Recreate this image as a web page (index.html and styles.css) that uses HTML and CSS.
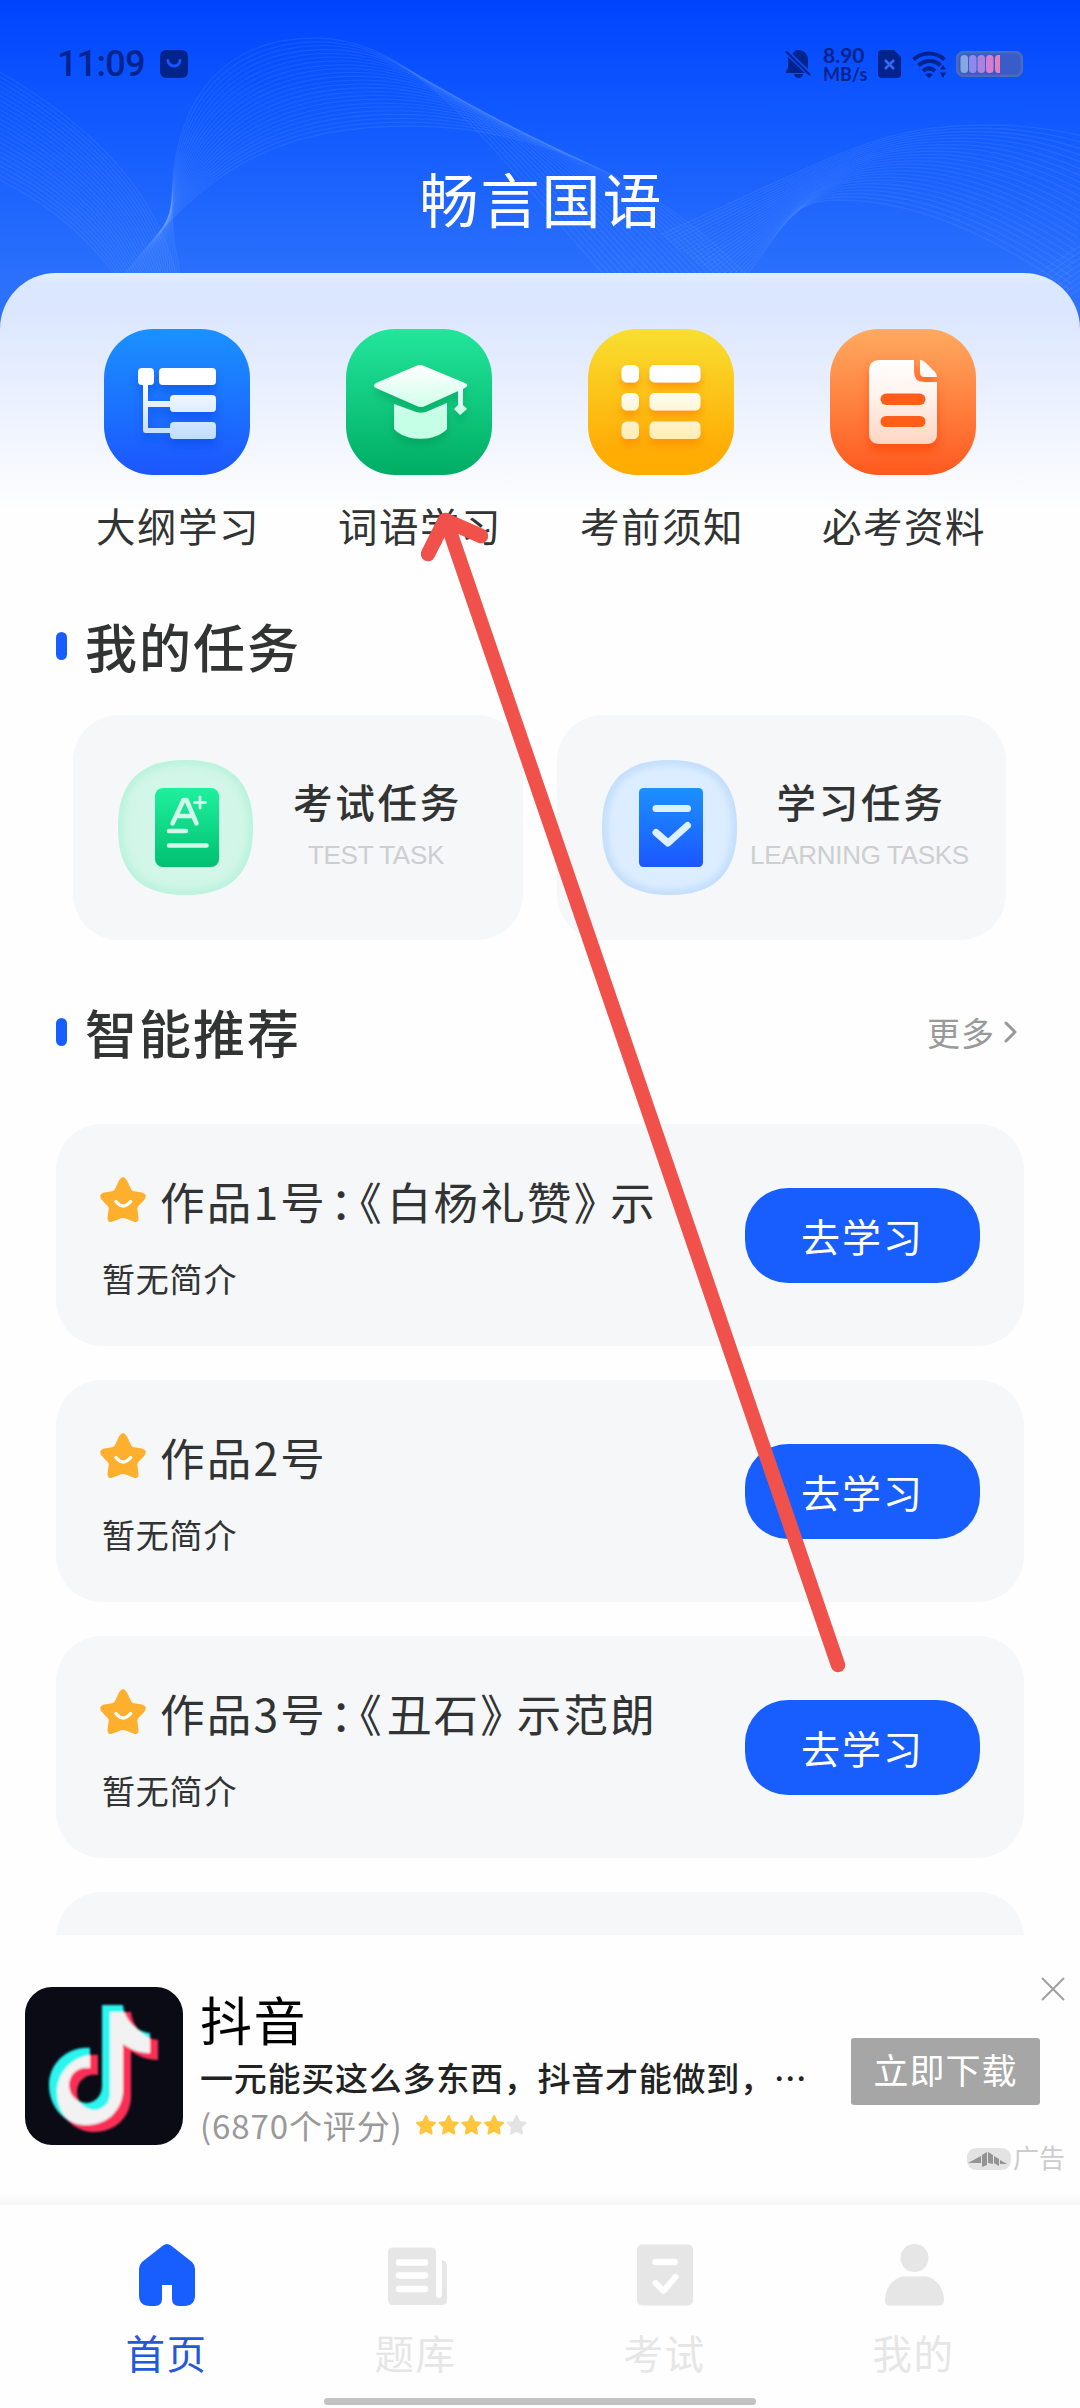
FILE: index.html
```html
<!DOCTYPE html>
<html lang="zh-CN">
<head>
<meta charset="utf-8">
<title>畅言国语</title>
<link rel="stylesheet" href="styles.css">
</head>
<body>
<div class="app">
  <header class="hero">
    <svg class="waves" id="waves" viewBox="0 0 1080 340" aria-hidden="true"></svg>
    <div class="statusbar">
      <div class="status-left">
        <span class="time">11:09</span>
        <svg width="28" height="28" viewBox="0 0 28 28"><rect width="28" height="28" rx="6" fill="#00238c"/><path d="M8 10.500a6 5.500 0 0 0 12 0" fill="none" stroke="#1b55ff" stroke-width="2.800" stroke-linecap="round"/></svg>
      </div>
      <div class="status-right">
        <svg class="bell" width="26" height="28" viewBox="0 0 26 28"><path d="M3 7l17 16H1v-2l2-3zM7.500 4C10 1 10 0 13 0c6 0 10 4 10 10v9zM9 24h9a4.500 4 0 0 1-9 0z" fill="#00238c"/><path d="M1 1.500l24 23.500" stroke="#00238c" stroke-width="2.400"/></svg>
        <div class="speed"><span>8.90</span><small>MB/s</small></div>
        <svg class="sim" width="23" height="28" viewBox="0 0 23 28"><path d="M4 0h12l7 7v17a4 4 0 0 1-4 4H4a4 4 0 0 1-4-4V4a4 4 0 0 1 4-4z" fill="#00238c"/><path d="M7 10l9 9M16 10l-9 9" stroke="#3568f5" stroke-width="2.600"/></svg>
        <svg class="wifi" width="34" height="27" viewBox="0 0 34 27"><g fill="none" stroke="#00238c" stroke-width="4"><path d="M1.500 8.500c9-8 22-8 31 0"/><path d="M6.500 14.500c7-6 16-6 22 0"/><path d="M11 20c4-3.500 8-3.500 12 0"/></g><path d="M13 23.500q4-2.500 8 0l-4 3.500zM31 14l3 4.500h-6zM31 27l3-5.500h-6z" fill="#00238c"/></svg>
        <svg width="67" height="26" viewBox="0 0 67 26"><rect x="1" y="1" width="65" height="24" rx="7" fill="#3a5ccb" stroke="#4c6db3" stroke-width="2.500"/><rect x="4.500" y="4" width="7.500" height="18" rx="3.500" fill="#86a8e0"/><rect x="13" y="4" width="7.500" height="18" rx="3.500" fill="#9089e9"/><rect x="21.500" y="4" width="7.500" height="18" rx="3.500" fill="#ad82dd"/><rect x="30" y="4" width="7.500" height="18" rx="3.500" fill="#d27fd0"/><path d="M42.500 4h1.500v18h-1.500a3.500 3.500 0 0 1-3.500-3.500v-11a3.500 3.500 0 0 1 3.500-3.500z" fill="#e87fb8"/></svg>
      </div>
    </div>
    <h1>畅言国语</h1>
  </header>

  <main class="panel">
    <nav class="shortcuts">
      <a class="shortcut">
        <svg width="146" height="146" viewBox="0 0 146 146">
          <defs><linearGradient id="gb" x2="0" y2="1"><stop stop-color="#1b91ff"/><stop offset="1" stop-color="#1c56ff"/></linearGradient>
          <linearGradient id="wb" gradientUnits="userSpaceOnUse" x1="0" y1="39" x2="0" y2="110"><stop offset=".2" stop-color="#fff"/><stop offset="1" stop-color="#bfdcff"/></linearGradient>
          <filter id="sh" x="-30%" y="-30%" width="160%" height="180%"><feDropShadow dx="0" dy="7" stdDeviation="5" flood-color="#003ee0" flood-opacity=".42"/></filter></defs>
          <rect width="146" height="146" rx="49" fill="url(#gb)"/>
          <g filter="url(#sh)" fill="url(#wb)"><rect x="34" y="39" width="16" height="17" rx="4"/><rect x="55" y="39" width="57" height="17" rx="4"/><rect x="66" y="66" width="46" height="17" rx="4"/><rect x="66" y="93" width="46" height="17" rx="4"/><path d="M39 55h5v17h23v6H44v21h23v5H42a3 3 0 0 1-3-3z"/></g>
        </svg>
        <span>大纲学习</span>
      </a>
      <a class="shortcut">
        <svg width="146" height="146" viewBox="0 0 146 146">
          <defs><linearGradient id="gg" x2="0" y2="1"><stop stop-color="#22e69b"/><stop offset="1" stop-color="#00ad64"/></linearGradient>
          <linearGradient id="wg" gradientUnits="userSpaceOnUse" x1="0" y1="36" x2="0" y2="110"><stop stop-color="#fff"/><stop offset=".7" stop-color="#c5ffe5"/><stop offset="1" stop-color="#c5ffe5"/></linearGradient>
          <filter id="sg" x="-30%" y="-30%" width="160%" height="180%"><feDropShadow dx="0" dy="6" stdDeviation="4" flood-color="#008f4c" flood-opacity=".42"/></filter></defs>
          <rect width="146" height="146" rx="49" fill="url(#gg)"/>
          <g filter="url(#sg)" fill="url(#wg)"><path d="M70 37q4-2 8 0l41 17q4 2 1 4l-3 2v16l4 4-7 6-6-6 4-4V62L79 77q-4 2-8 0L30 59q-4-2 0-5z"/><path d="M48 75l22 8q5 1.500 10 0l21-9v26c-12 13-41 13-53 0z"/></g>
        </svg>
        <span>词语学习</span>
      </a>
      <a class="shortcut">
        <svg width="146" height="146" viewBox="0 0 146 146">
          <defs><linearGradient id="gy" x2="0" y2="1"><stop stop-color="#f8df31"/><stop offset=".8" stop-color="#ffae06"/><stop offset="1" stop-color="#ffac00"/></linearGradient>
          <linearGradient id="wy" gradientUnits="userSpaceOnUse" x1="0" y1="36" x2="0" y2="110"><stop offset=".2" stop-color="#fff"/><stop offset="1" stop-color="#ffedb5"/></linearGradient>
          <filter id="sy" x="-30%" y="-30%" width="160%" height="180%"><feDropShadow dx="0" dy="6" stdDeviation="4" flood-color="#ff8a00" flood-opacity=".75"/></filter></defs>
          <rect width="146" height="146" rx="49" fill="url(#gy)"/>
          <g filter="url(#sy)" fill="url(#wy)"><rect x="33.500" y="36" width="17.500" height="17.500" rx="5.500"/><rect x="61.500" y="36" width="51" height="17.500" rx="5"/><rect x="33.500" y="64" width="17.500" height="17.500" rx="5.500"/><rect x="61.500" y="64" width="51" height="17.500" rx="5"/><rect x="33.500" y="92.500" width="17.500" height="17.500" rx="5.500"/><rect x="61.500" y="92.500" width="51" height="17.500" rx="5"/></g>
        </svg>
        <span>考前须知</span>
      </a>
      <a class="shortcut">
        <svg width="146" height="146" viewBox="0 0 146 146">
          <defs><linearGradient id="go" x2="0" y2="1"><stop stop-color="#ffaa60"/><stop offset="1" stop-color="#ff591f"/></linearGradient>
          <linearGradient id="wo" gradientUnits="userSpaceOnUse" x1="0" y1="31" x2="0" y2="115"><stop stop-color="#fff"/><stop offset=".4" stop-color="#fff4ef"/><stop offset="1" stop-color="#ffd5c2"/></linearGradient>
          <filter id="so" x="-30%" y="-30%" width="160%" height="180%"><feDropShadow dx="0" dy="7" stdDeviation="5" flood-color="#ff4300" flood-opacity=".6"/></filter></defs>
          <rect width="146" height="146" rx="49" fill="url(#go)"/>
          <g filter="url(#so)" fill="url(#wo)"><path d="M50 31h34v12q0 10 10 10h13v51q0 11-11 11H50q-11 0-11-11V42q0-11 11-11z"/><path d="M90 31q3 0 6 3l9 9q2 2 2 5H95q-5 0-5-5z"/></g>
          <g fill="#ff5e1a"><rect x="50.500" y="64.500" width="45" height="11.500" rx="5.700"/><rect x="50.500" y="87" width="45" height="11" rx="5.500"/></g>
        </svg>
        <span>必考资料</span>
      </a>
    </nav>

    <div class="section-head"><h2>我的任务</h2></div>

    <section class="tasks">
      <article class="task">
        <svg width="135" height="135" viewBox="0 0 135 135">
          <defs><linearGradient id="tg" x2="0" y2="1"><stop stop-color="#1ff09e"/><stop offset="1" stop-color="#00c070"/></linearGradient>
          <path id="blob" d="M67.500 0C113 0 135 22 135 67.500S113 135 67.500 135 0 113 0 67.500 22 0 67.500 0z"/>
          <clipPath id="sq"><use href="#blob"/></clipPath>
          <filter id="bl"><feGaussianBlur stdDeviation="4"/></filter></defs>
          <g clip-path="url(#sq)"><rect width="135" height="135" fill="#d2f6e8"/><use href="#blob" fill="none" stroke="#b1f2d9" stroke-width="8" filter="url(#bl)"/></g>
          <rect x="37" y="28" width="64" height="79" rx="8" fill="url(#tg)"/>
          <g fill="none" stroke="#d2f8e9" stroke-linecap="round" stroke-linejoin="round"><path d="M54.500 63.500L65.500 40h3L78.500 63.500M58.500 56H75" stroke-width="4.500"/><path d="M82 37v11M76.500 42.500h11" stroke-width="2.800"/><path d="M51 71h17M51 85.500h37.500" stroke-width="4.600"/></g>
        </svg>
        <div class="task-text"><h3>考试任务</h3><p>TEST TASK</p></div>
      </article>
      <article class="task">
        <svg width="135" height="135" viewBox="0 0 135 135">
          <g clip-path="url(#sq)"><rect width="135" height="135" fill="#dcedff"/><use href="#blob" fill="none" stroke="#b9d8fa" stroke-width="8" filter="url(#bl)"/></g>
          <rect x="37" y="28" width="64" height="79" rx="4.500" fill="url(#gb)"/>
          <g fill="none" stroke="#dcf0ff" stroke-linecap="round" stroke-linejoin="round" stroke-width="7"><path d="M54 48.500h31.500"/><path d="M54 72.500L66 83l19.500-17.500"/></g>
        </svg>
        <div class="task-text"><h3>学习任务</h3><p>LEARNING TASKS</p></div>
      </article>
    </section>

    <div class="section-head second"><h2>智能推荐</h2><a class="more">更多<svg width="14" height="22" viewBox="0 0 14 22"><path d="M2 2l9 9-9 9" fill="none" stroke="#999" stroke-width="3" stroke-linecap="round" stroke-linejoin="round"/></svg></a></div>

    <section class="list">
      <article class="work">
        <div class="work-text">
          <h3><svg class="star" width="46" height="46" viewBox="0 0 46 46"><use href="#starface"/></svg><span>作品1号<i class="colon">：</i><i class="open">《</i>白杨礼赞<i class="close">》</i>示</span></h3>
          <p>暂无简介</p>
        </div>
        <button>去学习</button>
      </article>
      <article class="work">
        <div class="work-text">
          <h3><svg class="star" width="46" height="46" viewBox="0 0 46 46"><use href="#starface"/></svg><span>作品2号</span></h3>
          <p>暂无简介</p>
        </div>
        <button>去学习</button>
      </article>
      <article class="work">
        <div class="work-text">
          <h3><svg class="star" width="46" height="46" viewBox="0 0 46 46"><use href="#starface"/></svg><span>作品3号<i class="colon">：</i><i class="open">《</i>丑石<i class="close">》</i>示范朗</span></h3>
          <p>暂无简介</p>
        </div>
        <button>去学习</button>
      </article>
      <article class="work"></article>
    </section>
  </main>

  <aside class="ad">
    <svg class="ad-icon" width="158" height="158" viewBox="0 0 158 158">
      <defs>
        <path id="note" d="M54 18h21c1 14 13 27 27 28v20c-11 0-20-4-27-9v45c0 21-16 36-37 36S1 120 1 98s19-39 41-37v20c-12-2-21 6-21 17 0 10 7 17 17 18 9 0 16-7 16-17z"/>
        <clipPath id="noteclip"><use href="#note" x="23"/></clipPath>
        <filter id="soft"><feGaussianBlur stdDeviation=".8"/></filter>
      </defs>
      <rect width="158" height="158" rx="27" fill="#0b0b15"/>
      <g filter="url(#soft)"><use href="#note" x="31" y="7" fill="#fc2e57"/><use href="#note" x="23" fill="#2af5ee"/><g clip-path="url(#noteclip)"><use href="#note" x="31" y="7" fill="#f2f2f2"/></g></g>
    </svg>
    <div class="ad-text">
      <h3>抖音</h3>
      <p class="ad-desc">一元能买这么多东西，抖音才能做到，<span>⋯</span></p>
      <p class="ad-rate"><span>(6870个评分)</span>
        <svg width="112" height="22" viewBox="0 0 112 22" stroke-width="2" stroke-linejoin="round">
          <defs><path id="mini" d="M11 2l2.800 6 6.200.8-4.600 4.400 1.200 6.300L11 16.500l-5.600 3 1.200-6.300L2 8.800 8.200 8z"/></defs>
          <g fill="#ffc53d" stroke="#ffc53d"><use href="#mini"/><use href="#mini" x="22.700"/><use href="#mini" x="45.400"/><use href="#mini" x="68.100"/></g><use href="#mini" x="90.500" fill="#e3e3e3" stroke="#e3e3e3"/>
        </svg>
      </p>
    </div>
    <div class="ad-side">
      <svg class="ad-close" width="24" height="24" viewBox="0 0 24 24"><path d="M1 1l22 22M23 1L1 23" stroke="#a0a0a0" stroke-width="2"/></svg>
      <button>立即下载</button>
      <div class="ad-tag"><svg width="44" height="22" viewBox="0 0 44 22"><rect width="44" height="22" rx="9" fill="#e3e3e3"/><g fill="#939393"><path d="M1 15L14 8v7z"/><path d="M15 7l5-3v13l-5 2z"/><path d="M21 4l5 3v9l-5-1z"/><path d="M27 8l5 3v7l-5-3z"/><path d="M33 12l7 4h-7z"/></g></svg><span>广告</span></div>
    </div>
  </aside>

  <nav class="tabs">
    <a class="tab active"><svg width="62" height="66" viewBox="0 0 62 66"><path d="M27 3.500q4-3 8 0L56 20q3 3 3 7v26q0 11-11 11h-5q-7 0-7-7V43H26v14q0 7-7 7h-5Q3 64 3 53V27q0-4 3-7z" fill="#185eff"/></svg><span>首页</span></a>
    <a class="tab"><svg width="62" height="66" viewBox="0 0 62 66"><path d="M8 5.500h38q5 0 5 5V52q0 4 3 4t3-4V18q5 1 5 6v34q0 5-5 5H8q-5 0-5-5V10.500q0-5 5-5z" fill="#e6e6e6"/><path d="M14 20.500h26M14 33.500h26M14 47h26" stroke="#fff" stroke-width="6.500" stroke-linecap="round"/></svg><span>题库</span></a>
    <a class="tab"><svg width="62" height="66" viewBox="0 0 62 66"><rect x="3" y="2.500" width="56" height="61" rx="5" fill="#e6e6e6"/><g fill="none" stroke="#fff" stroke-width="6.500" stroke-linecap="round" stroke-linejoin="round"><path d="M21.500 20h19"/><path d="M21.500 41l8 8 12-14" stroke-width="6"/></g></svg><span>考试</span></a>
    <a class="tab"><svg width="62" height="66" viewBox="0 0 62 66"><circle cx="31.500" cy="16" r="14" fill="#e6e6e6"/><path d="M20 34.500h23c10 2 18 11 18 24q0 5-5 5H7q-5 0-5-5c0-13 8-22 18-24z" fill="#e6e6e6"/></svg><span>我的</span></a>
  </nav>
  <div class="home-bar"></div>

  <svg class="pointer" width="1080" height="2408" viewBox="0 0 1080 2408" aria-hidden="true">
    <g fill="none" stroke="#f0514b" stroke-width="14.500" stroke-linecap="round" stroke-linejoin="round"><path d="M838 1665L446 520"/><path d="M428 554L445 520L481 536"/></g>
  </svg>
</div>

<svg class="sprites" width="0" height="0" aria-hidden="true">
  <symbol id="starface" viewBox="0 0 46 46"><path d="M19 3.500q4-7 8 0l4 8.500q1 2 3 2.300l8 1.200q6 2 2.500 7L38 29.500q-1 1.500-.5 3.500l1 7.500q0 6-5 4l-8-3q-2.500-1-5 0l-8 3q-5 2-5-4l1-7.500q.5-2-.5-3.500L1.500 22.500q-3.500-5 2.500-7l8-1.200q2-.3 3-2.300z" fill="#ffaf2e"/><path d="M16 24.500q7 9 14.500 0" fill="none" stroke="#fff" stroke-width="3.400" stroke-linecap="round"/></symbol>
</svg>
<script src="waves.js"></script>
</body>
</html>
```
FILE: styles.css
```css
* { box-sizing: border-box; margin: 0; padding: 0; }

body {
  width: 1080px;
  background: #fefefe;
  color: #323333;
  font-family: "Noto Sans CJK SC", sans-serif;
}

svg { display: block; flex: none; }
h1, h2, h3 { font-weight: 400; }
i { font-style: normal; }
button { border: 0; font-family: inherit; color: #fff; }

.app {
  position: relative;
  display: flex;
  flex-direction: column;
  width: 1080px;
  height: 2408px;
  overflow: hidden;
}

/* header */
.hero {
  position: relative;
  height: 340px;
  flex: none;
  margin-bottom: -67px;
  background: linear-gradient(#0044ff 0, #1058ff 110px, #2a70fc 273px, #2d73fc 340px);
}
.waves { position: absolute; inset: 0; width: 1080px; height: 340px; }
.waves path { fill: none; stroke: #8fc0ff; stroke-opacity: .12; stroke-width: 1.3; }

.statusbar {
  position: relative;
  display: flex;
  justify-content: space-between;
  align-items: center;
  height: 128px;
  padding: 0 57px;
  color: #00238c;
}
.status-left, .status-right { display: flex; align-items: center; }
.status-left { gap: 15px; }
.time { width: 88px; font: 500 36px/40px Roboto, sans-serif; letter-spacing: -.7px; white-space: nowrap; }
.bell { margin-right: 2px; }
.speed { display: flex; flex-direction: column; width: 46px; margin: 0 9px 0 10px; font: 700 21px/20px Lato, sans-serif; white-space: nowrap; }
.speed small { font-size: 18px; line-height: 18px; }
.sim { margin-right: 11px; }
.wifi { margin-right: 10px; }

h1 {
  position: relative;
  height: 88px;
  margin-top: 26px;
  padding-left: 3px;
  text-align: center;
  color: #fff;
  font-size: 59px;
  line-height: 88px;
  letter-spacing: 2px;
}

/* content sheet */
.panel {
  position: relative;
  height: 1662px;
  flex: none;
  overflow: hidden;
  border-radius: 56px 56px 0 0;
  background: linear-gradient(#e0f0fc 0, #dbe6ff 12px, #dbe6ff 35px, #fefefe 240px);
}

.shortcuts {
  display: grid;
  grid-template-columns: repeat(4, 242px);
  height: 316px;
  padding: 56px 56px 0;
}
.shortcut { display: flex; flex-direction: column; align-items: center; gap: 20px; }
.shortcut span { font-size: 39.500px; line-height: 60px; letter-spacing: 1.500px; margin-right: -2px; }

.section-head { display: flex; align-items: center; height: 116px; padding: 0 62px 0 56px; }
.section-head h2 { display: flex; align-items: center; gap: 18px; font-size: 52px; font-weight: 500; line-height: 76px; letter-spacing: 2px; margin-top: -2px; }
.section-head h2::before { content: ""; width: 11px; height: 28px; border-radius: 6px; background: #185eff; }
.section-head.second { height: 184px; }
.section-head.second h2 { margin-top: 0; }
.more { display: flex; align-items: center; gap: 9px; margin-left: auto; color: #999; font-size: 33px; line-height: 48px; letter-spacing: 1px; }

.tasks { display: grid; grid-template-columns: 450px 449px; gap: 34px; padding: 10px 73px 0; }
.task { display: flex; align-items: center; height: 225px; padding: 0 24px 0 45px; border-radius: 46px; background: #f5f7f9; }
.task-text { flex: 1; text-align: center; white-space: nowrap; padding-bottom: 10px; }
.task-text h3 { font-size: 39.500px; font-weight: 500; line-height: 58px; letter-spacing: 2.800px; margin-right: -3px; }
.task-text p { margin: 7px -10px 0; color: #ccced0; font: 26px/36px "Liberation Sans", sans-serif; letter-spacing: -.3px; }

.list { display: flex; flex-direction: column; gap: 34px; padding: 0 56px; }
.work { display: flex; align-items: center; justify-content: space-between; height: 222px; flex: none; padding: 0 44px; border-radius: 46px; background: #f5f7f9; }
.work-text h3 { display: flex; align-items: center; gap: 14px; height: 66px; font-size: 44.500px; line-height: 66px; letter-spacing: 2.200px; white-space: nowrap; }
.star { margin-top: -2px; }
.work-text i { font-feature-settings: "halt"; }
.colon { margin-left: 3px; }
.open { margin-left: 5px; margin-right: 3px; }
.close { margin-right: 12px; }
.work-text p { margin: 20px 0 0 2px; font-size: 33px; line-height: 48px; letter-spacing: .800px; }
.work button { width: 235px; height: 95px; border-radius: 43px; background: #185eff; font-size: 39px; line-height: 95px; letter-spacing: 2px; }

/* ad banner */
.ad {
  display: flex;
  height: 270px;
  flex: none;
  padding-left: 25px;
  background: linear-gradient(#fefefe 258px, #f6f6f6 270px);
}
.ad-icon { margin-top: 52px; }
.ad-text { width: 610px; margin: 46px 0 0 17px; white-space: nowrap; }
.ad-text h3 { height: 76px; color: #000; font-size: 52px; line-height: 76px; letter-spacing: 1.500px; }
.ad-desc { height: 40px; color: #222; font-size: 33px; font-weight: 500; line-height: 40px; letter-spacing: .750px; }
.ad-rate { display: flex; align-items: center; gap: 12px; height: 56px; color: #999; font-size: 33px; line-height: 56px; letter-spacing: .900px; }
.ad-side { display: flex; flex-direction: column; width: 254px; margin-left: auto; align-items: flex-end; padding: 42px 15px 0 0; }
.ad-side button { width: 189px; height: 67px; margin: 37px 25px 41px 0; border-radius: 3px; background: #a6a6a6; font-size: 35px; line-height: 62px; letter-spacing: 1px; padding-bottom: 5px; }
.ad-tag { display: flex; align-items: center; gap: 2px; color: #ccc; font-size: 26px; line-height: 28px; }
.ad-tag span { margin-top: -3px; }

/* bottom tabs */
.tabs { display: grid; grid-template-columns: repeat(4, 249px); height: 193px; flex: none; padding: 37px 42px 0; background: #fefefe; }
.tab { display: flex; flex-direction: column; align-items: center; gap: 15px; color: #e6e6e6; }
.tab span { font-size: 39.500px; line-height: 58px; letter-spacing: 1.500px; }
.tab.active { color: #2358d9; }
.home-bar { width: 432px; height: 7px; flex: none; margin: 0 auto; border-radius: 4px; background: #c2c2c2; }

/* annotation arrow laid over the page */
.pointer { position: absolute; left: 0; top: 0; pointer-events: none; }
.sprites { position: absolute; }
```
FILE: waves.js
```js
// Each ribbon is a set of curves interpolated between its two edge curves.
const ribbons = [
  { n: 24, a: [0, 72, 90, 125, 160, 190, 180, 290], b: [0, 180, 60, 210, 100, 250, 125, 290] },
  {
    n: 24,
    a: [184, 290, 152, 170, 180, 38, 315, 38, 420, 38, 490, 150, 618, 290],
    b: [112, 290, 190, 190, 250, 126, 410, 126, 560, 126, 680, 200, 760, 290]
  },
  {
    n: 24,
    a: [660, 235, 850, 150, 880, 125, 990, 125, 1030, 125, 1060, 130, 1090, 138],
    b: [735, 290, 790, 220, 790, 200, 840, 200, 920, 200, 1000, 240, 1070, 290]
  },
  { n: 8, a: [1030, 280, 1050, 265, 1065, 255, 1090, 240], b: [1050, 310, 1065, 300, 1075, 290, 1095, 280] }
];
const svg = document.getElementById("waves");
for (const { n, a, b } of ribbons) {
  for (let i = 0; i < n; i++) {
    const t = i / (n - 1);
    const p = a.map((v, k) => v + (b[k] - v) * t);
    const path = document.createElementNS("http://www.w3.org/2000/svg", "path");
    path.setAttribute("d", `M${p[0]} ${p[1]}C${p.slice(2).join(" ")}`);
    svg.appendChild(path);
  }
}
```
